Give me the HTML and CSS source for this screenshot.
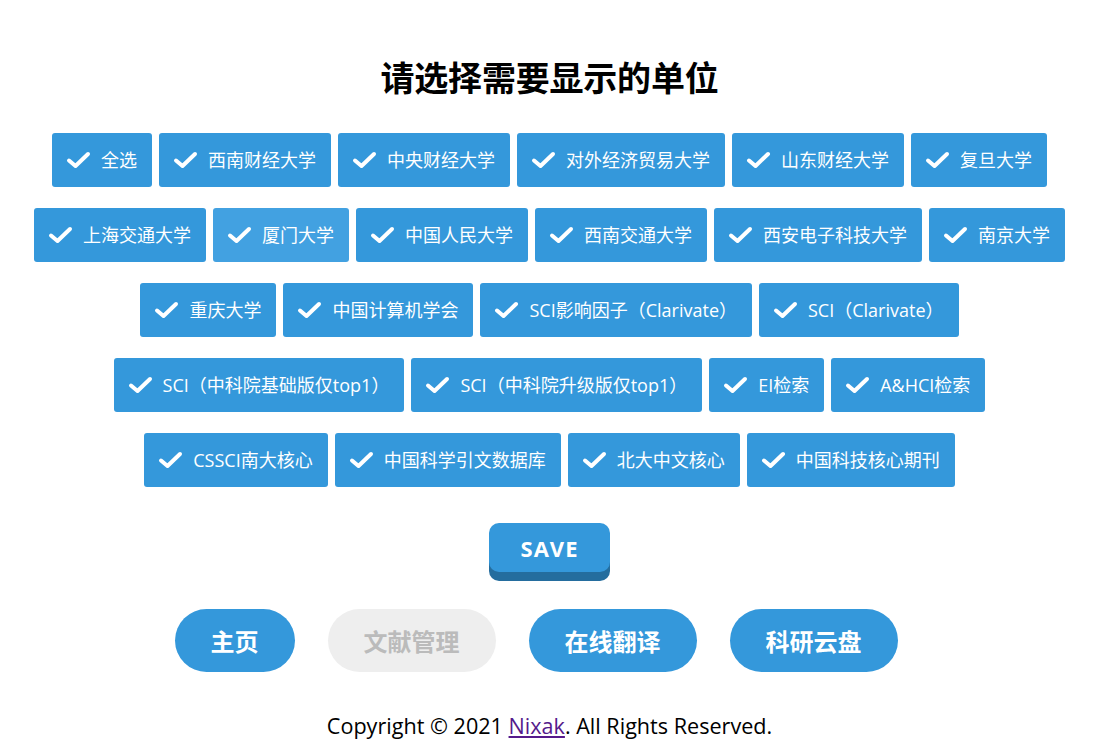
FILE: index.html
```html
<!DOCTYPE html>
<html lang="zh-CN">
<head>
<meta charset="utf-8">
<title>请选择需要显示的单位</title>
<link rel="stylesheet" href="styles.css">
</head>
<body>
<div class="page">
  <h1 class="title">请选择需要显示的单位</h1>

  <div class="choices">
    <div class="row">
      <label class="chk"><svg class="tick" viewBox="0 0 25 18"><path d="M3 9.5 L9.5 15 L22 3"/></svg><span>全选</span></label>
      <label class="chk"><svg class="tick" viewBox="0 0 25 18"><path d="M3 9.5 L9.5 15 L22 3"/></svg><span>西南财经大学</span></label>
      <label class="chk"><svg class="tick" viewBox="0 0 25 18"><path d="M3 9.5 L9.5 15 L22 3"/></svg><span>中央财经大学</span></label>
      <label class="chk"><svg class="tick" viewBox="0 0 25 18"><path d="M3 9.5 L9.5 15 L22 3"/></svg><span>对外经济贸易大学</span></label>
      <label class="chk"><svg class="tick" viewBox="0 0 25 18"><path d="M3 9.5 L9.5 15 L22 3"/></svg><span>山东财经大学</span></label>
      <label class="chk"><svg class="tick" viewBox="0 0 25 18"><path d="M3 9.5 L9.5 15 L22 3"/></svg><span>复旦大学</span></label>
    </div>
    <div class="row">
      <label class="chk"><svg class="tick" viewBox="0 0 25 18"><path d="M3 9.5 L9.5 15 L22 3"/></svg><span>上海交通大学</span></label>
      <label class="chk hover"><svg class="tick" viewBox="0 0 25 18"><path d="M3 9.5 L9.5 15 L22 3"/></svg><span>厦门大学</span></label>
      <label class="chk"><svg class="tick" viewBox="0 0 25 18"><path d="M3 9.5 L9.5 15 L22 3"/></svg><span>中国人民大学</span></label>
      <label class="chk"><svg class="tick" viewBox="0 0 25 18"><path d="M3 9.5 L9.5 15 L22 3"/></svg><span>西南交通大学</span></label>
      <label class="chk"><svg class="tick" viewBox="0 0 25 18"><path d="M3 9.5 L9.5 15 L22 3"/></svg><span>西安电子科技大学</span></label>
      <label class="chk"><svg class="tick" viewBox="0 0 25 18"><path d="M3 9.5 L9.5 15 L22 3"/></svg><span>南京大学</span></label>
    </div>
    <div class="row">
      <label class="chk"><svg class="tick" viewBox="0 0 25 18"><path d="M3 9.5 L9.5 15 L22 3"/></svg><span>重庆大学</span></label>
      <label class="chk"><svg class="tick" viewBox="0 0 25 18"><path d="M3 9.5 L9.5 15 L22 3"/></svg><span>中国计算机学会</span></label>
      <label class="chk"><svg class="tick" viewBox="0 0 25 18"><path d="M3 9.5 L9.5 15 L22 3"/></svg><span>SCI影响因子（Clarivate）</span></label>
      <label class="chk"><svg class="tick" viewBox="0 0 25 18"><path d="M3 9.5 L9.5 15 L22 3"/></svg><span>SCI（Clarivate）</span></label>
    </div>
    <div class="row">
      <label class="chk"><svg class="tick" viewBox="0 0 25 18"><path d="M3 9.5 L9.5 15 L22 3"/></svg><span>SCI（中科院基础版仅top1）</span></label>
      <label class="chk"><svg class="tick" viewBox="0 0 25 18"><path d="M3 9.5 L9.5 15 L22 3"/></svg><span>SCI（中科院升级版仅top1）</span></label>
      <label class="chk"><svg class="tick" viewBox="0 0 25 18"><path d="M3 9.5 L9.5 15 L22 3"/></svg><span>EI检索</span></label>
      <label class="chk"><svg class="tick" viewBox="0 0 25 18"><path d="M3 9.5 L9.5 15 L22 3"/></svg><span>A&amp;HCI检索</span></label>
    </div>
    <div class="row">
      <label class="chk"><svg class="tick" viewBox="0 0 25 18"><path d="M3 9.5 L9.5 15 L22 3"/></svg><span>CSSCI南大核心</span></label>
      <label class="chk"><svg class="tick" viewBox="0 0 25 18"><path d="M3 9.5 L9.5 15 L22 3"/></svg><span>中国科学引文数据库</span></label>
      <label class="chk"><svg class="tick" viewBox="0 0 25 18"><path d="M3 9.5 L9.5 15 L22 3"/></svg><span>北大中文核心</span></label>
      <label class="chk"><svg class="tick" viewBox="0 0 25 18"><path d="M3 9.5 L9.5 15 L22 3"/></svg><span>中国科技核心期刊</span></label>
    </div>
  </div>

  <div class="save-wrap">
    <button class="save">SAVE</button>
  </div>

  <nav class="nav">
    <a class="pill">主页</a>
    <a class="pill disabled">文献管理</a>
    <a class="pill">在线翻译</a>
    <a class="pill">科研云盘</a>
  </nav>

  <footer class="footer">Copyright © 2021 <a class="link" href="#">Nixak</a>. All Rights Reserved.</footer>
</div>
</body>
</html>
```

FILE: styles.css
```css
html, body {
  margin: 0;
  padding: 0;
  background: #ffffff;
}

body {
  font-family: "Open Sans", "Noto Sans CJK SC", sans-serif;
  color: #000;
}

.page {
  width: 1099px;
  display: flex;
  flex-direction: column;
  align-items: center;
}

.title {
  margin: 57px 0 0 0;
  height: 40px;
  line-height: 40px;
  font-size: 34px;
  font-weight: 700;
  font-family: "Noto Sans CJK SC", sans-serif;
  letter-spacing: -0.2px;
}

.choices {
  margin-top: 36px;
  display: flex;
  flex-direction: column;
  gap: 21px;
  width: 100%;
}

.row {
  display: flex;
  justify-content: center;
  gap: 7px;
}

.chk {
  display: flex;
  align-items: center;
  height: 54px;
  padding: 0 15px 0 14px;
  background: #3498db;
  border-radius: 3px;
  color: #fff;
  font-size: 18px;
  white-space: nowrap;
  cursor: pointer;
}

.chk.hover {
  background: #42a1e1;
}

.chk span {
  line-height: 24px;
}

.tick {
  width: 25px;
  height: 18px;
  margin-right: 10px;
  flex: none;
}

.tick path {
  fill: none;
  stroke: #ffffff;
  stroke-width: 4;
  stroke-linecap: round;
  stroke-linejoin: round;
}

.save-wrap {
  margin-top: 36px;
  height: 49px;
  display: flex;
  justify-content: center;
}

.save {
  width: 121px;
  height: 49px;
  border: none;
  border-radius: 10px;
  background: #3498db;
  box-shadow: 0 9px 0 #246d9e;
  color: #fff;
  font-family: "Open Sans", sans-serif;
  font-weight: 700;
  font-size: 22px;
  letter-spacing: 1px;
  padding: 0;
  cursor: pointer;
}

.nav {
  margin-top: 37px;
  display: flex;
  gap: 33px;
  padding-right: 27px;
}

.pill {
  display: flex;
  align-items: center;
  justify-content: center;
  height: 63px;
  padding: 0 36px;
  border-radius: 32px;
  background: #3498db;
  color: #fff;
  font-family: "Noto Sans CJK SC", sans-serif;
  font-weight: 700;
  font-size: 24px;
  text-decoration: none;
  cursor: pointer;
}

.pill.disabled {
  background: #eeeeee;
  color: #bbbbbb;
}

.footer {
  margin-top: 39px;
  font-size: 21.6px;
  line-height: 30px;
}

.link {
  color: #551a8b;
  text-decoration: underline;
}
```
